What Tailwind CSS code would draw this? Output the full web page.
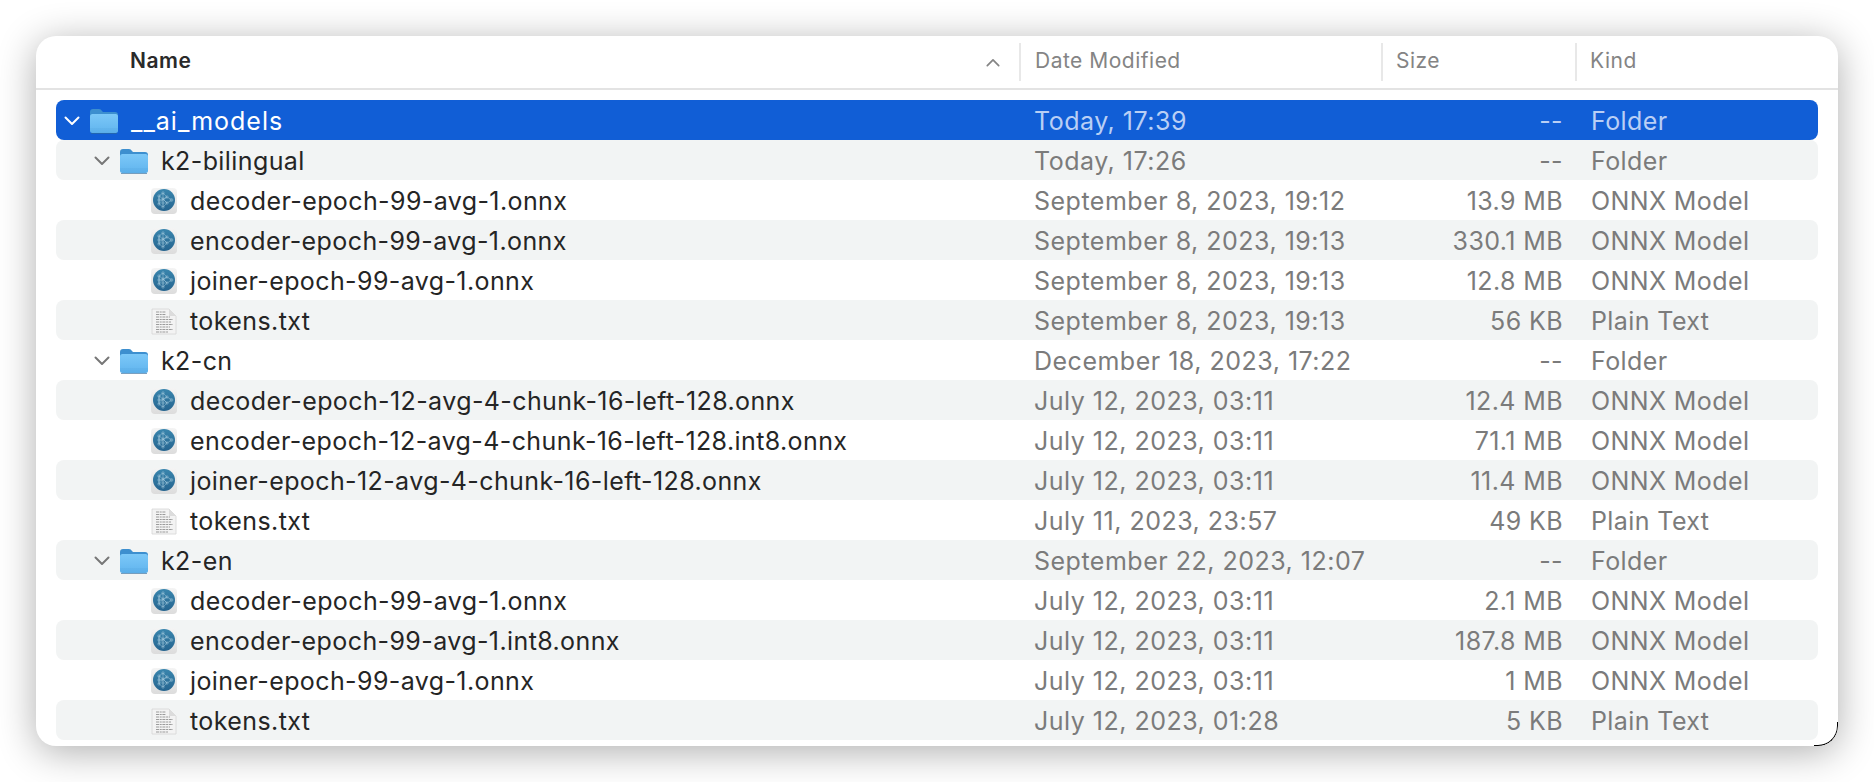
<!doctype html>
<html>
<head>
<meta charset="utf-8">
<script src="https://cdn.jsdelivr.net/npm/@tailwindcss/browser@4"></script>
</head>
<body class="w-[1874px] h-[782px] bg-white overflow-hidden font-['Inter','Liberation_Sans',sans-serif]">

<!-- icons -->
<svg class="absolute w-0 h-0">
  <defs>
    <linearGradient id="fold" x1="0" y1="0" x2="0" y2="1"><stop offset="0" stop-color="#7cc8f8"/><stop offset="1" stop-color="#60b4ee"/></linearGradient>
    <linearGradient id="ball" x1="0" y1="0" x2="0" y2="1"><stop offset="0" stop-color="#3a86ae"/><stop offset="1" stop-color="#25648f"/></linearGradient>
    <linearGradient id="tile" x1="0" y1="0" x2="0" y2="1"><stop offset="0" stop-color="#f4f4f4"/><stop offset="1" stop-color="#dcdcdc"/></linearGradient>
    <symbol id="folder" viewBox="0 0 28 26">
      <path d="M0 4q0-3 3-3h6q2 0 3 2l1 1h12q3 0 3 3v4H0z" fill="#3d8fcf"/>
      <rect x="0" y="6" width="28" height="19" rx="2.5" fill="url(#fold)"/>
      <path d="M0 21h28M0 23h28" stroke="#4f9fdc" stroke-width=".6" opacity=".6"/>
      <path d="M1 25.4h26" stroke="#2d6a9c" stroke-width="1" opacity=".7"/>
    </symbol>
    <symbol id="onnx" viewBox="0 0 26 26">
      <rect x="0" y="0" width="26" height="26" rx="4" fill="url(#tile)"/>
      <circle cx="13" cy="12" r="11" fill="url(#ball)"/>
      <g fill="none" stroke="#a9cde0" stroke-width=".45">
        <path d="M8 8l4-3 4 4 5 3-5 3-4 4-4-3zM8 8l4 3 4-2M8 8v8M12 5v14M8 16l4-5 4 4M12 11l4 4M8 12h4l4-3"/>
        <circle cx="8" cy="8" r="1.2"/><circle cx="8" cy="12" r="1.2"/><circle cx="8" cy="16" r="1.2"/>
        <circle cx="12" cy="5" r="1.2"/><circle cx="12" cy="11" r="1.2"/><circle cx="12" cy="15" r="1.2"/><circle cx="12" cy="19" r="1.2"/>
        <circle cx="16" cy="9" r="1.2"/><circle cx="16" cy="15" r="1.2"/><circle cx="20.500" cy="12" r="1.4"/>
      </g>
    </symbol>
    <symbol id="txt" viewBox="0 0 26 28">
      <path d="M1 2h17l7 7v18H1z" fill="#f3f3f3" stroke="#d6d6d6" stroke-width=".8"/>
      <path d="M18 2l7 7h-7z" fill="#dcdcdc"/>
      <g stroke="#9b9b9b" stroke-width="1">
        <path d="M5 5h10M5 7.500h10M5 10h14M5 12.500h17M5 15h15M5 17.500h17M5 20h14M5 22.500h17M5 25h12" stroke-dasharray="3 .7 2 .7"/>
      </g>
    </symbol>
    <symbol id="chev" viewBox="0 0 16 10">
      <path d="M1.500 1.500L8 8l6.500-6.500" fill="none" stroke="currentColor" stroke-width="2" stroke-linecap="round" stroke-linejoin="round"/>
    </symbol>
  </defs>
</svg>

<div class="relative ml-[36px] mt-[36px] w-[1802px] h-[710px] bg-white rounded-[20px] shadow-[0_6px_38px_rgba(0,0,0,0.32)] overflow-hidden text-[25px] leading-10 tracking-[0.4px] text-[#252525]">
  <div class="absolute right-0 bottom-0 w-[24px] h-[24px] rounded-br-[20px] border-r border-b border-black"></div>

  <!-- header -->
  <div class="flex items-center h-[54px] border-b-2 border-[#e3e3e3] text-[21px] text-[#848484] font-normal tracking-[0.5px]">
    <div class="relative w-[983px] h-[38px] flex items-center pb-[2px]">
      <span class="ml-[94px] font-semibold text-[#2a2a2a]">Name</span>
      <svg class="absolute left-[950px] top-[15px] w-[14px] h-[9px] text-[#858585] rotate-180"><use href="#chev"/></svg>
    </div>
    <div class="w-[362px] h-[38px] pl-[14px] pb-[2px] border-l-2 border-[#e8e8e8] flex items-center">Date Modified</div>
    <div class="w-[194px] h-[38px] pl-[13px] pb-[2px] border-l-2 border-[#e8e8e8] flex items-center">Size</div>
    <div class="flex-1 h-[38px] pl-[13px] pb-[2px] border-l-2 border-[#e8e8e8] flex items-center">Kind</div>
  </div>

  <!-- rows -->
  <div class="mt-[10px] mx-[20px] w-[1762px] [&>div]:pt-[2px]">
    <div class="flex items-center h-10 rounded-lg bg-[#115ed6] text-white">
      <div class="w-[978px] flex items-center">
        <svg class="ml-[8px] w-[16px] h-[10px]"><use href="#chev"/></svg>
        <svg class="ml-[10px] w-[28px] h-[26px]"><use href="#folder"/></svg>
        <span class="ml-[13px] tracking-[1px]">__ai_models</span>
      </div>
      <div class="w-[377px] text-[#b9cff5] tracking-[0.5px]">Today, 17:39</div>
      <div class="w-[152px] text-right text-[#b9cff5]">--</div>
      <div class="ml-[28px] text-[#b9cff5]">Folder</div>
    </div>

    <div class="flex items-center h-10 rounded-lg bg-[#f2f4f4]">
      <div class="w-[978px] flex items-center">
        <svg class="ml-[38px] w-[16px] h-[10px] text-[#777]"><use href="#chev"/></svg>
        <svg class="ml-[10px] w-[28px] h-[26px]"><use href="#folder"/></svg>
        <span class="ml-[13px]">k2-bilingual</span>
      </div>
      <div class="w-[377px] text-[#7b7b7b] tracking-[0.5px]">Today, 17:26</div>
      <div class="w-[152px] text-right text-[#7b7b7b]">--</div>
      <div class="ml-[28px] text-[#7b7b7b]">Folder</div>
    </div>
    <div class="flex items-center h-10 rounded-lg">
      <div class="w-[978px] flex items-center">
        <svg class="ml-[95px] w-[26px] h-[26px]"><use href="#onnx"/></svg>
        <span class="ml-[13px]">decoder-epoch-99-avg-1.onnx</span>
      </div>
      <div class="w-[377px] text-[#7b7b7b] tracking-[0.5px]">September 8, 2023, 19:12</div>
      <div class="w-[152px] text-right text-[#7b7b7b]">13.9 MB</div>
      <div class="ml-[28px] text-[#7b7b7b]">ONNX Model</div>
    </div>
    <div class="flex items-center h-10 rounded-lg bg-[#f2f4f4]">
      <div class="w-[978px] flex items-center">
        <svg class="ml-[95px] w-[26px] h-[26px]"><use href="#onnx"/></svg>
        <span class="ml-[13px]">encoder-epoch-99-avg-1.onnx</span>
      </div>
      <div class="w-[377px] text-[#7b7b7b] tracking-[0.5px]">September 8, 2023, 19:13</div>
      <div class="w-[152px] text-right text-[#7b7b7b]">330.1 MB</div>
      <div class="ml-[28px] text-[#7b7b7b]">ONNX Model</div>
    </div>
    <div class="flex items-center h-10 rounded-lg">
      <div class="w-[978px] flex items-center">
        <svg class="ml-[95px] w-[26px] h-[26px]"><use href="#onnx"/></svg>
        <span class="ml-[13px]">joiner-epoch-99-avg-1.onnx</span>
      </div>
      <div class="w-[377px] text-[#7b7b7b] tracking-[0.5px]">September 8, 2023, 19:13</div>
      <div class="w-[152px] text-right text-[#7b7b7b]">12.8 MB</div>
      <div class="ml-[28px] text-[#7b7b7b]">ONNX Model</div>
    </div>
    <div class="flex items-center h-10 rounded-lg bg-[#f2f4f4]">
      <div class="w-[978px] flex items-center">
        <svg class="ml-[95px] w-[26px] h-[28px]"><use href="#txt"/></svg>
        <span class="ml-[13px]">tokens.txt</span>
      </div>
      <div class="w-[377px] text-[#7b7b7b] tracking-[0.5px]">September 8, 2023, 19:13</div>
      <div class="w-[152px] text-right text-[#7b7b7b]">56 KB</div>
      <div class="ml-[28px] text-[#7b7b7b]">Plain Text</div>
    </div>

    <div class="flex items-center h-10 rounded-lg">
      <div class="w-[978px] flex items-center">
        <svg class="ml-[38px] w-[16px] h-[10px] text-[#777]"><use href="#chev"/></svg>
        <svg class="ml-[10px] w-[28px] h-[26px]"><use href="#folder"/></svg>
        <span class="ml-[13px]">k2-cn</span>
      </div>
      <div class="w-[377px] text-[#7b7b7b] tracking-[0.5px]">December 18, 2023, 17:22</div>
      <div class="w-[152px] text-right text-[#7b7b7b]">--</div>
      <div class="ml-[28px] text-[#7b7b7b]">Folder</div>
    </div>
    <div class="flex items-center h-10 rounded-lg bg-[#f2f4f4]">
      <div class="w-[978px] flex items-center">
        <svg class="ml-[95px] w-[26px] h-[26px]"><use href="#onnx"/></svg>
        <span class="ml-[13px]">decoder-epoch-12-avg-4-chunk-16-left-128.onnx</span>
      </div>
      <div class="w-[377px] text-[#7b7b7b] tracking-[0.5px]">July 12, 2023, 03:11</div>
      <div class="w-[152px] text-right text-[#7b7b7b]">12.4 MB</div>
      <div class="ml-[28px] text-[#7b7b7b]">ONNX Model</div>
    </div>
    <div class="flex items-center h-10 rounded-lg">
      <div class="w-[978px] flex items-center">
        <svg class="ml-[95px] w-[26px] h-[26px]"><use href="#onnx"/></svg>
        <span class="ml-[13px]">encoder-epoch-12-avg-4-chunk-16-left-128.int8.onnx</span>
      </div>
      <div class="w-[377px] text-[#7b7b7b] tracking-[0.5px]">July 12, 2023, 03:11</div>
      <div class="w-[152px] text-right text-[#7b7b7b]">71.1 MB</div>
      <div class="ml-[28px] text-[#7b7b7b]">ONNX Model</div>
    </div>
    <div class="flex items-center h-10 rounded-lg bg-[#f2f4f4]">
      <div class="w-[978px] flex items-center">
        <svg class="ml-[95px] w-[26px] h-[26px]"><use href="#onnx"/></svg>
        <span class="ml-[13px]">joiner-epoch-12-avg-4-chunk-16-left-128.onnx</span>
      </div>
      <div class="w-[377px] text-[#7b7b7b] tracking-[0.5px]">July 12, 2023, 03:11</div>
      <div class="w-[152px] text-right text-[#7b7b7b]">11.4 MB</div>
      <div class="ml-[28px] text-[#7b7b7b]">ONNX Model</div>
    </div>
    <div class="flex items-center h-10 rounded-lg">
      <div class="w-[978px] flex items-center">
        <svg class="ml-[95px] w-[26px] h-[28px]"><use href="#txt"/></svg>
        <span class="ml-[13px]">tokens.txt</span>
      </div>
      <div class="w-[377px] text-[#7b7b7b] tracking-[0.5px]">July 11, 2023, 23:57</div>
      <div class="w-[152px] text-right text-[#7b7b7b]">49 KB</div>
      <div class="ml-[28px] text-[#7b7b7b]">Plain Text</div>
    </div>

    <div class="flex items-center h-10 rounded-lg bg-[#f2f4f4]">
      <div class="w-[978px] flex items-center">
        <svg class="ml-[38px] w-[16px] h-[10px] text-[#777]"><use href="#chev"/></svg>
        <svg class="ml-[10px] w-[28px] h-[26px]"><use href="#folder"/></svg>
        <span class="ml-[13px]">k2-en</span>
      </div>
      <div class="w-[377px] text-[#7b7b7b] tracking-[0.5px]">September 22, 2023, 12:07</div>
      <div class="w-[152px] text-right text-[#7b7b7b]">--</div>
      <div class="ml-[28px] text-[#7b7b7b]">Folder</div>
    </div>
    <div class="flex items-center h-10 rounded-lg">
      <div class="w-[978px] flex items-center">
        <svg class="ml-[95px] w-[26px] h-[26px]"><use href="#onnx"/></svg>
        <span class="ml-[13px]">decoder-epoch-99-avg-1.onnx</span>
      </div>
      <div class="w-[377px] text-[#7b7b7b] tracking-[0.5px]">July 12, 2023, 03:11</div>
      <div class="w-[152px] text-right text-[#7b7b7b]">2.1 MB</div>
      <div class="ml-[28px] text-[#7b7b7b]">ONNX Model</div>
    </div>
    <div class="flex items-center h-10 rounded-lg bg-[#f2f4f4]">
      <div class="w-[978px] flex items-center">
        <svg class="ml-[95px] w-[26px] h-[26px]"><use href="#onnx"/></svg>
        <span class="ml-[13px]">encoder-epoch-99-avg-1.int8.onnx</span>
      </div>
      <div class="w-[377px] text-[#7b7b7b] tracking-[0.5px]">July 12, 2023, 03:11</div>
      <div class="w-[152px] text-right text-[#7b7b7b]">187.8 MB</div>
      <div class="ml-[28px] text-[#7b7b7b]">ONNX Model</div>
    </div>
    <div class="flex items-center h-10 rounded-lg">
      <div class="w-[978px] flex items-center">
        <svg class="ml-[95px] w-[26px] h-[26px]"><use href="#onnx"/></svg>
        <span class="ml-[13px]">joiner-epoch-99-avg-1.onnx</span>
      </div>
      <div class="w-[377px] text-[#7b7b7b] tracking-[0.5px]">July 12, 2023, 03:11</div>
      <div class="w-[152px] text-right text-[#7b7b7b]">1 MB</div>
      <div class="ml-[28px] text-[#7b7b7b]">ONNX Model</div>
    </div>
    <div class="flex items-center h-10 rounded-lg bg-[#f2f4f4]">
      <div class="w-[978px] flex items-center">
        <svg class="ml-[95px] w-[26px] h-[28px]"><use href="#txt"/></svg>
        <span class="ml-[13px]">tokens.txt</span>
      </div>
      <div class="w-[377px] text-[#7b7b7b] tracking-[0.5px]">July 12, 2023, 01:28</div>
      <div class="w-[152px] text-right text-[#7b7b7b]">5 KB</div>
      <div class="ml-[28px] text-[#7b7b7b]">Plain Text</div>
    </div>
  </div>
</div>
</body>
</html>
